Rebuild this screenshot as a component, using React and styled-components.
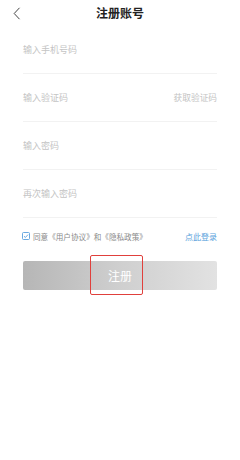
import React from "react";
import styled, { createGlobalStyle } from "styled-components";

const Global = createGlobalStyle`
  html, body { margin: 0; padding: 0; background: #fff; }
  body { font-family: "Noto Sans CJK SC", "Noto Sans", sans-serif; }
  * { box-sizing: border-box; }
`;

const Page = styled.div`
  width: 240px;
  height: 460px;
  background: #fff;
  display: flex;
  flex-direction: column;
`;

const Header = styled.div`
  height: 26px;
  display: grid;
  grid-template-columns: 1fr auto 1fr;
  align-items: center;
`;

const Back = styled.div`
  padding-left: 13px;
  display: flex;
  align-items: center;
  height: 24px;
`;

const Title = styled.div`
  font-size: 12px;
  font-weight: 700;
  color: #222;
  line-height: 24px;
`;

const Form = styled.div`
  padding: 0 23px;
  display: flex;
  flex-direction: column;
`;

const Row = styled.div`
  height: 48px;
  border-bottom: 1px solid #f2f2f2;
  display: flex;
  align-items: center;
  justify-content: space-between;
  font-size: 9px;
  color: #c6c6c6;
  padding-bottom: 1px;
`;

const Hint = styled.span`
  font-size: ${(p) => p.$size || 9}px;
  color: #c4c4c4;
`;

const Agree = styled.div`
  margin-top: 11px;
  height: 14px;
  display: flex;
  align-items: center;
  justify-content: space-between;
`;

const AgreeLeft = styled.div`
  display: flex;
  align-items: center;
  gap: 3px;
  font-size: 7.6px;
  color: #8a8a8a;
  margin-left: -1px;
`;

const Link = styled.span`
  font-size: 8px;
  color: #5a9fdc;
`;

const Button = styled.div`
  position: relative;
  margin-top: 18px;
  height: 29px;
  border-radius: 2px;
  background: linear-gradient(90deg, #b6b6b6 0%, #cfcfcf 50%, #e2e2e2 100%);
  display: flex;
  align-items: center;
  justify-content: center;
  color: #fff;
  font-size: 12px;
`;

const Highlight = styled.div`
  position: absolute;
  left: 67px;
  top: -6px;
  width: 53px;
  height: 40px;
  border: 1px solid #e0403c;
  border-radius: 2px;
`;

export default function App() {
  return (
    <Page>
      <Global />
      <Header>
        <Back>
          <svg width="8" height="13" viewBox="0 0 8 13">
            <polyline points="6.5,0.8 1.2,6.5 6.5,12.2" fill="none" stroke="#444" strokeWidth="1" />
          </svg>
        </Back>
        <Title>注册账号</Title>
        <div />
      </Header>
      <Form>
        <Row><Hint>输入手机号码</Hint></Row>
        <Row><Hint>输入验证码</Hint><Hint $size={8.7}>获取验证码</Hint></Row>
        <Row><Hint>输入密码</Hint></Row>
        <Row><Hint>再次输入密码</Hint></Row>
        <Agree>
          <AgreeLeft>
            <svg width="8" height="8" viewBox="0 0 8 8">
              <rect x="0.5" y="0.5" width="7" height="7" rx="1" fill="none" stroke="#5a9fdc" strokeWidth="0.9" />
              <polyline points="2,4.2 3.4,5.5 6,2.6" fill="none" stroke="#5a9fdc" strokeWidth="0.9" />
            </svg>
            <span>同意《用户协议》和《隐私政策》</span>
          </AgreeLeft>
          <Link>点此登录</Link>
        </Agree>
        <Button>
          注册
          <Highlight />
        </Button>
      </Form>
    </Page>
  );
}
